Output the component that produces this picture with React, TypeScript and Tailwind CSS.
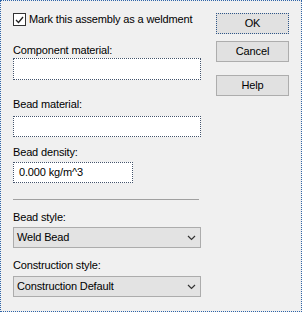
import React from "react";

function Label({ text, className }: { text: string; className?: string }) {
  return <div className={`h-[14px] leading-[14px] ${className ?? ""}`}>{text}</div>;
}

function Select({ value, className }: { value: string; className?: string }) {
  return (
    <div
      className={`w-[188px] h-[21px] border border-[#acacac] bg-[#e3e3e3] flex items-center justify-between pl-[3px] pr-[4px] ${className ?? ""}`}
    >
      <span>{value}</span>
      <svg width="9" height="6" viewBox="0 0 9 6">
        <path d="M1 1 L4.5 4.5 L8 1" stroke="#333" strokeWidth="1.2" fill="none" />
      </svg>
    </div>
  );
}

function Btn({ text, primary, className }: { text: string; primary?: boolean; className?: string }) {
  return (
    <div
      className={`w-[73px] h-[21px] flex items-center justify-center bg-[#e1e1e1] border ${
        primary ? "border-[#2f5688] border-dotted" : "border-[#adadad]"
      } ${className ?? ""}`}
    >
      {text}
    </div>
  );
}

export default function App() {
  return (
    <div
      className="w-[302px] h-[312px] bg-[#f0f0f0] border border-dotted border-[#2e64a8] text-[11px] tracking-[-0.15px] text-black flex"
      style={{ fontFamily: '"Liberation Sans", Arial, sans-serif' }}
    >
      <div className="flex flex-col pl-[12px] pt-[12px] w-[203px]">
        <div className="flex items-center h-[13px]">
          <div className="w-[13px] h-[13px] border border-[#333] bg-white flex items-center justify-center">
            <svg width="9" height="8" viewBox="0 0 9 8">
              <path d="M1 4 L3.5 6.5 L8 1" stroke="#222" strokeWidth="1.3" fill="none" />
            </svg>
          </div>
          <span className="ml-[3px]">Mark this assembly as a weldment</span>
        </div>

        <Label text="Component material:" className="mt-[17px]" />
        <div className="mt-[1px] w-[188px] h-[22px] bg-white border border-dotted border-[#44546c]" />

        <Label text="Bead material:" className="mt-[17px]" />
        <div className="mt-[5px] w-[188px] h-[21px] bg-white border border-dotted border-[#44546c]" />

        <Label text="Bead density:" className="mt-[8px]" />
        <div className="mt-[3px] w-[120px] h-[21px] bg-white border border-dotted border-[#44546c] flex items-center pl-[5px]">
          0.000 kg/m^3
        </div>

        <div className="mt-[16px] w-[186px] h-px bg-[#a0a0a0]" />

        <Label text="Bead style:" className="mt-[10px]" />
        <Select value="Weld Bead" className="mt-[3px]" />

        <Label text="Construction style:" className="mt-[10px]" />
        <Select value="Construction Default" className="mt-[4px]" />
      </div>

      <div className="flex flex-col pt-[12px] ml-[12px]">
        <Btn text="OK" primary />
        <Btn text="Cancel" className="mt-[7px]" />
        <Btn text="Help" className="mt-[13px]" />
      </div>
    </div>
  );
}
